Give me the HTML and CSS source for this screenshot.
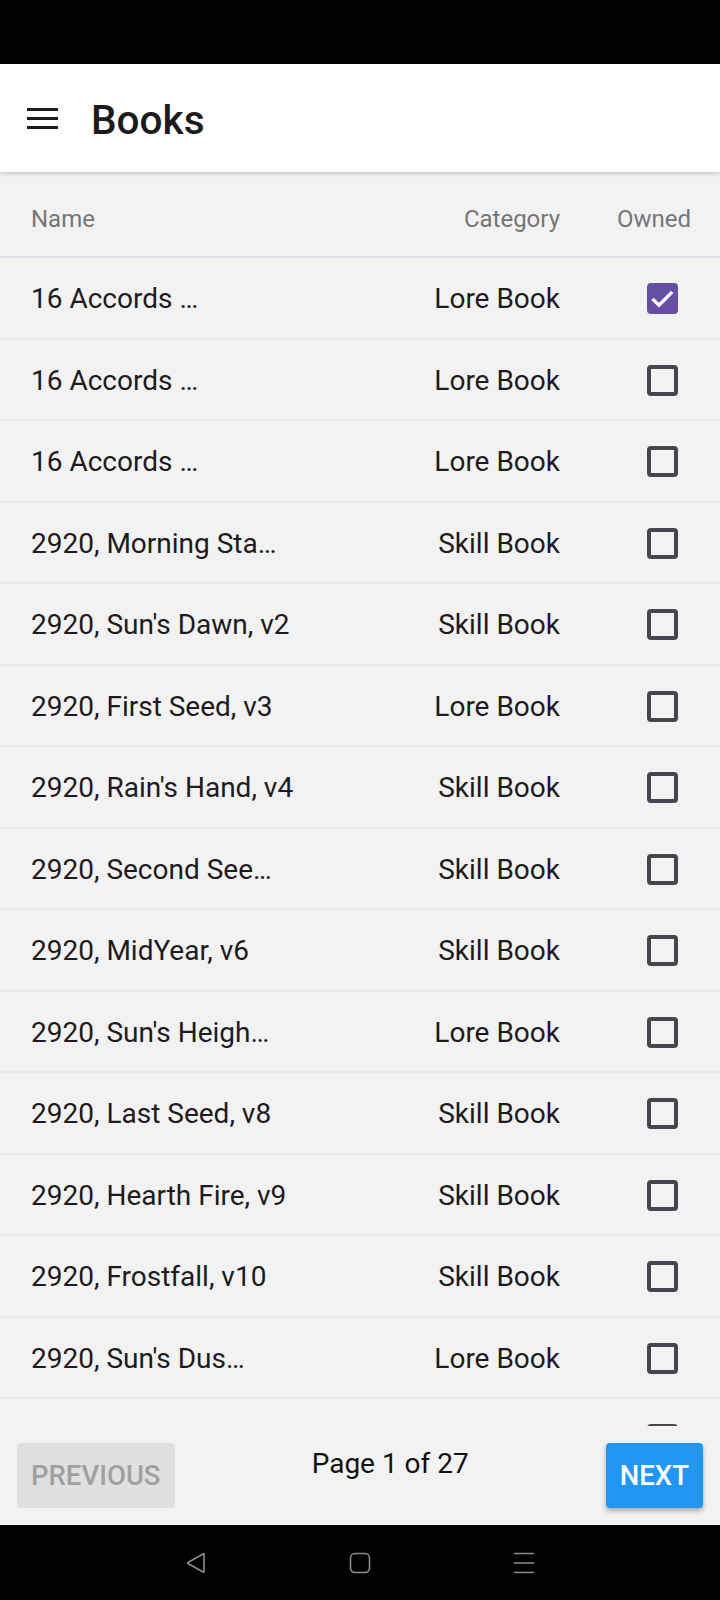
FILE: index.html
```html
<!DOCTYPE html>
<html lang="en">
<head>
<meta charset="utf-8">
<title>Books</title>
<link rel="stylesheet" href="styles.css">
</head>
<body>
<div class="screen">
  <div class="status-bar"></div>
  <header class="app-bar">
    <svg class="menu-icon" width="31" height="21" viewBox="0 0 31 21" aria-hidden="true">
      <rect x="0" y="0" width="31" height="3" fill="#1d1b20"/>
      <rect x="0" y="9" width="31" height="3" fill="#1d1b20"/>
      <rect x="0" y="18" width="31" height="3" fill="#1d1b20"/>
    </svg>
    <h1 class="title">Books</h1>
  </header>
  <main class="content">
    <div class="table-head">
      <span class="col-name">Name</span>
      <span class="col-cat">Category</span>
      <span class="col-owned">Owned</span>
    </div>
    <div class="table-body">
      <div class="row"><span class="col-name">16 Accords …</span><span class="col-cat">Lore Book</span><span class="box checked"><svg width="23" height="23" viewBox="0 0 23 23"><path d="M1.5 12 L8 18.2 L21.2 5" fill="none" stroke="#fff" stroke-width="3.2"/></svg></span></div>
      <div class="row"><span class="col-name">16 Accords …</span><span class="col-cat">Lore Book</span><span class="box"></span></div>
      <div class="row"><span class="col-name">16 Accords …</span><span class="col-cat">Lore Book</span><span class="box"></span></div>
      <div class="row"><span class="col-name">2920, Morning Sta…</span><span class="col-cat">Skill Book</span><span class="box"></span></div>
      <div class="row"><span class="col-name">2920, Sun's Dawn, v2</span><span class="col-cat">Skill Book</span><span class="box"></span></div>
      <div class="row"><span class="col-name">2920, First Seed, v3</span><span class="col-cat">Lore Book</span><span class="box"></span></div>
      <div class="row"><span class="col-name">2920, Rain's Hand, v4</span><span class="col-cat">Skill Book</span><span class="box"></span></div>
      <div class="row"><span class="col-name">2920, Second See…</span><span class="col-cat">Skill Book</span><span class="box"></span></div>
      <div class="row"><span class="col-name">2920, MidYear, v6</span><span class="col-cat">Skill Book</span><span class="box"></span></div>
      <div class="row"><span class="col-name">2920, Sun's Heigh…</span><span class="col-cat">Lore Book</span><span class="box"></span></div>
      <div class="row"><span class="col-name">2920, Last Seed, v8</span><span class="col-cat">Skill Book</span><span class="box"></span></div>
      <div class="row"><span class="col-name">2920, Hearth Fire, v9</span><span class="col-cat">Skill Book</span><span class="box"></span></div>
      <div class="row"><span class="col-name">2920, Frostfall, v10</span><span class="col-cat">Skill Book</span><span class="box"></span></div>
      <div class="row"><span class="col-name">2920, Sun's Dus…</span><span class="col-cat">Lore Book</span><span class="box"></span></div>
      <div class="row"><span class="col-name"></span><span class="col-cat"></span><span class="box"></span></div>
    </div>
    <footer class="pager">
      <button class="btn btn-prev" disabled>Previous</button>
      <span class="page-label">Page 1 of 27</span>
      <button class="btn btn-next">Next</button>
    </footer>
  </main>
  <nav class="nav-bar">
    <svg width="22" height="22" viewBox="0 0 22 22" aria-hidden="true"><path d="M19 1.5 L19 19.5 Q19 20.5 18 20 L3 11.5 Q2.2 11 3 10.5 L18 2 Q19 1.5 19 2.5 Z" fill="none" stroke="#8c8c8c" stroke-width="1.6" stroke-linejoin="round"/></svg>
    <svg width="22" height="22" viewBox="0 0 22 22" aria-hidden="true"><rect x="1.5" y="1.5" width="19" height="19" rx="4.5" fill="none" stroke="#8c8c8c" stroke-width="1.6"/></svg>
    <svg width="22" height="22" viewBox="0 0 22 22" aria-hidden="true"><path d="M1 1.5 H21 M1 11 H21 M1 20.5 H21" fill="none" stroke="#8c8c8c" stroke-width="1.6"/></svg>
  </nav>
</div>
</body>
</html>
```

FILE: styles.css
```css
* {
  box-sizing: border-box;
}

html, body {
  margin: 0;
  padding: 0;
}

body {
  font-family: Roboto, "Liberation Sans", Arial, sans-serif;
  background: #000;
}

.screen {
  width: 720px;
  height: 1600px;
  display: flex;
  flex-direction: column;
  background: #f2f2f2;
  overflow: hidden;
}

.status-bar {
  height: 64px;
  flex: none;
  background: #000;
}

.app-bar {
  height: 108px;
  flex: none;
  background: #fff;
  display: flex;
  align-items: center;
  gap: 33px;
  padding-left: 27px;
  box-shadow: 0 2px 4px rgba(0, 0, 0, 0.16);
  position: relative;
  z-index: 2;
}

.menu-icon {
  display: block;
  flex: none;
}

.title {
  margin: 0;
  font-size: 40.5px;
  font-weight: 500;
  color: #1d1b20;
  line-height: 1;
  padding-top: 5px;
}

.content {
  flex: 1;
  display: flex;
  flex-direction: column;
  min-height: 0;
}

.table-head,
.row {
  display: grid;
  grid-template-columns: 1fr auto 74px;
  column-gap: 57px;
  align-items: center;
  padding: 0 29px 0 31px;
}

.table-head {
  height: 86px;
  flex: none;
  padding-top: 10px;
  border-bottom: 2px solid #e7e0ec;
  font-size: 24px;
  color: #767676;
}

.table-body {
  flex: 1;
  min-height: 0;
  overflow: hidden;
}

.row {
  height: 81.5px;
  padding-top: 2px;
  border-bottom: 2px solid #e9e8ec;
  font-size: 28px;
  color: #1d1b20;
}

.col-name {
  white-space: nowrap;
  overflow: hidden;
}

.col-cat {
  justify-self: end;
  white-space: nowrap;
}

.col-owned {
  justify-self: end;
}

.box {
  justify-self: end;
  margin-right: 13px;
  width: 31px;
  height: 31px;
  border: 4px solid #49454f;
  border-radius: 4px;
  display: flex;
  align-items: center;
  justify-content: center;
}

.box.checked {
  background: #6750a4;
  border-color: #6750a4;
}

.box svg {
  display: block;
  flex: none;
}

.pager {
  height: 99px;
  flex: none;
  display: flex;
  justify-content: space-between;
  align-items: flex-start;
  padding: 17px 17px 0 17px;
  background: #f2f2f2;
}

.btn {
  height: 65px;
  padding: 0 14px;
  border: none;
  border-radius: 4px;
  font-family: Roboto, "Liberation Sans", Arial, sans-serif;
  font-size: 27.5px;
  font-weight: 500;
  text-transform: uppercase;
  line-height: 1;
}

.btn-prev {
  background: #e0e0e0;
  color: #a0a0a0;
}

.btn-next {
  background: #2196f3;
  color: #fff;
  box-shadow: 0 3px 5px rgba(0, 0, 0, 0.3);
}

.page-label {
  margin-top: 4px;
  font-size: 28px;
  color: #111;
}

.nav-bar {
  height: 75px;
  flex: none;
  background: #000;
  display: flex;
  align-items: flex-start;
  justify-content: center;
  gap: 142px;
  padding-top: 27px;
}

.nav-bar svg {
  display: block;
}
```
